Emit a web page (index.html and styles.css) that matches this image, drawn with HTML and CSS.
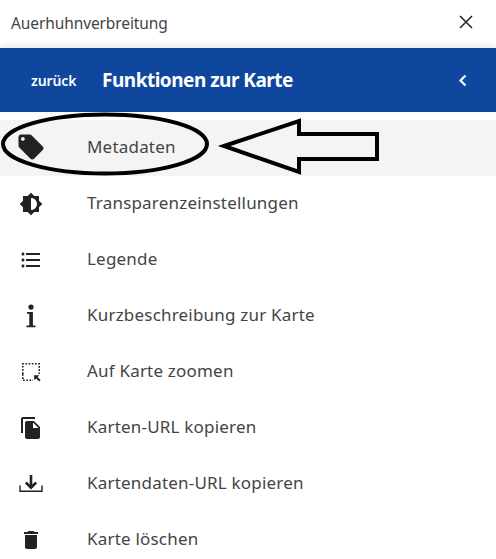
FILE: index.html
```html
<!DOCTYPE html>
<html lang="de">
<head>
    <meta charset="UTF-8">
    <meta name="viewport" content="width=device-width, initial-scale=1.0">
    <title>Auerhuhnverbreitung</title>
    <link rel="stylesheet" href="styles.css">
</head>
<body>
    <header class="top-bar">
        <span class="map-name">Auerhuhnverbreitung</span>
        <button class="close-btn" aria-label="Schließen">
            <svg viewBox="0 0 14 14" width="14" height="14"><path d="M1 1l12 12M13 1L1 13" fill="none" stroke="#2b2b2b" stroke-width="1.6"/></svg>
        </button>
    </header>

    <div class="title-bar">
        <span class="back-link">zurück</span>
        <h1>Funktionen zur Karte</h1>
        <svg class="chevron" viewBox="0 0 9 13" width="9" height="13"><path d="M7.5 1.5L2.5 6.5l5 5" fill="none" stroke="#fff" stroke-width="2.2"/></svg>
    </div>

    <ul class="menu">
        <li class="menu-item active">
            <svg class="tag-icon" viewBox="0 0 24 24" width="30" height="30"><path d="M21.41 11.58l-9-9C12.05 2.22 11.55 2 11 2H4c-1.1 0-2 .9-2 2v7c0 .55.22 1.05.59 1.42l9 9c.36.36.86.58 1.41.58.55 0 1.05-.22 1.41-.59l7-7c.37-.36.59-.86.59-1.41 0-.55-.23-1.06-.59-1.42zM5.5 7C4.67 7 4 6.33 4 5.5S4.67 4 5.5 4 7 4.67 7 5.5 6.33 7 5.5 7z"/></svg>
            <span>Metadaten</span>
        </li>
        <li class="menu-item">
            <svg viewBox="0 0 24 24" width="24" height="24"><path d="M20 15.31L23.31 12 20 8.69V4h-4.69L12 .69 8.69 4H4v4.69L.69 12 4 15.31V20h4.69L12 23.31 15.31 20H20v-4.69zM12 18V6c3.31 0 6 2.69 6 6s-2.69 6-6 6z"/></svg>
            <span>Transparenzeinstellungen</span>
        </li>
        <li class="menu-item">
            <svg viewBox="0 0 24 24" width="24" height="24"><path d="M4 10.5c-.83 0-1.5.67-1.5 1.5s.67 1.5 1.5 1.5 1.5-.67 1.5-1.5-.67-1.5-1.5-1.5zm0-6c-.83 0-1.5.67-1.5 1.5S3.17 7.5 4 7.5 5.5 6.83 5.5 6 4.83 4.5 4 4.5zm0 12c-.83 0-1.5.68-1.5 1.5s.68 1.5 1.5 1.5 1.5-.68 1.5-1.5-.67-1.5-1.5-1.5zM7 19h14v-2H7v2zm0-6h14v-2H7v2zm0-8v2h14V5H7z"/></svg>
            <span>Legende</span>
        </li>
        <li class="menu-item">
            <svg viewBox="0 0 24 24" width="24" height="24"><path d="M12 .5a2.6 2.6 0 1 0 0 5.200A2.600 2.600 0 0 0 12 .5zM8 8v1.800h2.300V21.500H7.500v1.800h9v-1.800h-2.600V8z"/></svg>
            <span>Kurzbeschreibung zur Karte</span>
        </li>
        <li class="menu-item">
            <svg viewBox="0 0 24 24" width="24" height="24"><path d="M3.800 14V3.800H20.200V14M3.800 14v6.200H14" fill="none" stroke="#222" stroke-width="1.600" stroke-dasharray="1.700 1.500"/><path d="M15 15.200h5.400l-1.800 1.800 3 3-1.400 1.400-3-3-1.800 1.800z"/></svg>
            <span>Auf Karte zoomen</span>
        </li>
        <li class="menu-item">
            <svg viewBox="0 0 24 24" width="24" height="24"><path d="M16 1H4c-1.100 0-2 .9-2 2v14h2V3h12V1zm-1 4l6 6v10c0 1.100-.9 2-2 2H7.990C6.890 23 6 22.100 6 21l.01-14c0-1.100.89-2 1.990-2h7zm-1 7h5.500L14 6.500V12z"/></svg>
            <span>Karten-URL kopieren</span>
        </li>
        <li class="menu-item">
            <svg viewBox="0 0 24 24" width="24" height="24"><path d="M1 13.500v5.800h22v-5.800" fill="none" stroke="#222" stroke-width="1.400"/><path d="M12 3v12.500M6.800 10.500l5.200 5.200 5.200-5.200" fill="none" stroke="#222" stroke-width="2.600"/></svg>
            <span>Kartendaten-URL kopieren</span>
        </li>
        <li class="menu-item">
            <svg viewBox="0 0 24 24" width="24" height="24"><path d="M6 19c0 1.100.9 2 2 2h8c1.100 0 2-.9 2-2V7H6v12zM19 4h-3.500l-1-1h-5l-1 1H5v2h14V4z"/></svg>
            <span>Karte löschen</span>
        </li>
    </ul>

    <!-- hand drawn annotation on top of the screenshot -->
    <svg class="annotation" viewBox="0 0 496 559" width="496" height="559">
        <ellipse cx="105" cy="144" rx="102" ry="29.500" fill="none" stroke="#000" stroke-width="4"/>
        <path d="M224 146L299 121V134H377V159H299V172Z" fill="none" stroke="#000" stroke-width="4"/>
    </svg>
</body>
</html>
```

FILE: styles.css
```css
html, body {
    height: 100%;
}

body {
    font-family: "Noto Sans", Arial, sans-serif;
    background-color: #fff;
    color: #444;
    margin: 0;
    padding: 0;
    overflow: hidden;
}

.top-bar {
    height: 48px;
    display: flex;
    align-items: center;
    justify-content: space-between;
    padding: 0 23px 2px 11px;
    box-sizing: border-box;
}

.map-name {
    font-size: 15.5px;
    letter-spacing: -0.1px;
}

.close-btn {
    display: flex;
    padding: 0;
    margin-bottom: 3px;
    border: none;
    background: none;
}

.title-bar {
    height: 64px;
    display: flex;
    align-items: center;
    background-color: #0f479f;
    color: #fff;
    padding: 0 29px 0 31px;
    box-shadow: 0 -2px 6px rgba(0, 0, 0, 0.1);
}

.back-link {
    width: 71px;
    font-size: 14px;
    font-weight: 600;
    letter-spacing: -0.1px;
}

.title-bar h1 {
    flex: 1;
    margin: 0;
    font-size: 19px;
    font-weight: 700;
    letter-spacing: -0.5px;
}

.menu {
    list-style: none;
    margin: 8px 0 0;
    padding: 0;
}

.menu-item {
    height: 56px;
    display: grid;
    grid-template-columns: 62px 1fr;
    column-gap: 25px;
    align-items: center;
    font-size: 17px;
    letter-spacing: 0.2px;
}

.menu-item span {
    padding-bottom: 4px;
}

.menu-item svg {
    justify-self: center;
    fill: #222;
}

.menu-item .tag-icon {
    margin-top: -2px;
}

.active {
    background-color: #f4f4f4;
}

.annotation {
    position: absolute;
    top: 0;
    left: 0;
    pointer-events: none;
}
```
